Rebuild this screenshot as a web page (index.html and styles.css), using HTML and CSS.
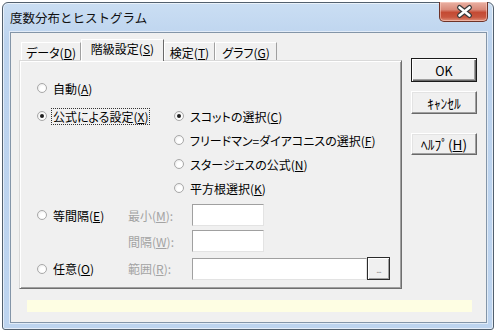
FILE: index.html
```html
<!DOCTYPE html>
<html lang="ja">
<head>
    <meta charset="UTF-8">
    <title>度数分布とヒストグラム</title>
    <link rel="stylesheet" href="styles.css">
</head>
<body>
    <div class="window">
        <div class="titlebar">
            <span class="title">度数分布とヒストグラム</span>
            <div class="close">
                <svg width="49" height="20" viewBox="0 0 49 20">
                    <path d="M19.5 6.5 L29.5 14.5 M29.5 6.5 L19.5 14.5" stroke="#3a3a3a" stroke-width="5" stroke-linecap="round"/>
                    <path d="M19.5 6.5 L29.5 14.5 M29.5 6.5 L19.5 14.5" stroke="#fff" stroke-width="2.6" stroke-linecap="round"/>
                </svg>
            </div>
        </div>
        <div class="client">
            <div class="main">
                <div class="tabctl">
                    <div class="tabs">
                        <div class="tab t1">データ(<u>D</u>)</div>
                        <div class="tab t2 active">階級設定(<u>S</u>)</div>
                        <div class="tab t3">検定(<u>T</u>)</div>
                        <div class="tab t4">グラフ(<u>G</u>)</div>
                    </div>
                    <div class="panel">
                        <div class="first">
                            <label class="opt"><span class="radio"></span><span>自動(<u>A</u>)</span></label>
                        </div>
                        <div class="upper">
                            <label class="opt"><span class="radio on"></span><span class="focus">公式による設定(<u>X</u>)</span></label>
                            <label class="opt"><span class="radio on"></span><span>スコットの選択(<u>C</u>)</span></label>
                            <label class="opt col2"><span class="radio"></span><span>フリードマン=ダイアコニスの選択(<u>F</u>)</span></label>
                            <label class="opt col2"><span class="radio"></span><span>スタージェスの公式(<u>N</u>)</span></label>
                            <label class="opt col2"><span class="radio"></span><span>平方根選択(<u>K</u>)</span></label>
                        </div>
                        <div class="lower">
                            <label class="opt"><span class="radio"></span><span>等間隔(<u>E</u>)</span></label>
                            <span class="dim">最小(<u>M</u>):</span>
                            <span class="field short"></span>

                            <span class="dim col2">間隔(<u>W</u>):</span>
                            <span class="field short"></span>

                            <label class="opt"><span class="radio"></span><span>任意(<u>O</u>)</span></label>
                            <span class="dim">範囲(<u>R</u>):</span>
                            <div class="range">
                                <span class="field long"></span>
                                <span class="browse">...</span>
                            </div>
                        </div>
                    </div>
                </div>
                <div class="buttons">
                    <div class="btn default">OK</div>
                    <div class="btn">ｷｬﾝｾﾙ</div>
                    <div class="btn help"><span>ﾍﾙﾌﾟ(<u>H</u>)</span></div>
                </div>
            </div>
            <div class="status"></div>
        </div>
    </div>
</body>
</html>
```

FILE: styles.css
```css
body {
    margin: 0;
    background-color: #fff;
    font-family: "Noto Sans CJK JP", "Noto Sans", sans-serif;
    font-size: 12px;
    color: #000;
}

u {
    text-decoration-thickness: 1px;
    text-underline-offset: 1px;
}

.window {
    margin: 2px 0 0 2px;
    width: 492px;
    height: 328px;
    box-sizing: border-box;
    border: 1px solid #52606e;
    border-radius: 6px 6px 3px 3px;
    background: linear-gradient(#cadef3, #bcd3ee 40px, #bdd4ef);
    box-shadow: inset 0 0 0 1px rgba(255, 255, 255, 0.6);
    padding: 0 5px 6px 7px;
}

.titlebar {
    display: flex;
    justify-content: space-between;
    height: 29px;
}
.title {
    font-size: 12.5px;
    line-height: 29px;
    color: #111;
}
.close {
    width: 49px;
    height: 20px;
    margin-top: -1px;
    box-sizing: border-box;
    border: 1px solid #6e3328;
    border-top: none;
    border-radius: 0 0 5px 5px;
    background: linear-gradient(#eab1a3, #d98a7a 40%, #c44a33 55%, #c8563f 80%, #e0927c);
    box-shadow: inset 0 0 0 1px rgba(255, 220, 210, 0.5);
}
.close svg {
    display: block;
    margin-top: -1px;
}

.client {
    width: 477px;
    height: 291px;
    box-sizing: border-box;
    border: 1px solid #8395a8;
    box-shadow: 0 0 0 1px rgba(255, 255, 255, 0.55);
    background-color: #f0f0f0;
    padding: 6px 8px 0 8px;
}

.main {
    display: flex;
    gap: 9px;
}

.tabctl {
    width: 383px;
}
.tabs {
    display: flex;
    height: 21px;
    padding-left: 2px;
    align-items: flex-end;
}
.tab {
    height: 18px;
    line-height: 18px;
    text-align: center;
    box-sizing: border-box;
    border-left: 1px solid #fff;
    border-right: 1px solid #a0a0a0;
    border-top: 1px solid #fff;
    font-feature-settings: "palt";
    padding-top: 1px;
}
.t1 { width: 60px; }
.t2 { width: 83px; }
.t3 { width: 51px; }
.t4 { width: 62px; }
.tab.active {
    height: 22px;
    margin-bottom: -1px;
    line-height: 18px;
    padding-top: 0;
    background-color: #f0f0f0;
    border-right: 1px solid #696969;
    position: relative;
}

.panel {
    height: 229px;
    box-sizing: border-box;
    border: 1px solid;
    border-color: #d9d9d9 #6f6f6f #6f6f6f #d9d9d9;
    box-shadow: inset 1px 1px #fff, inset -1px -1px #a0a0a0;
    padding: 15px 0 0 17px;
    font-feature-settings: "palt";
}

.opt {
    display: flex;
    align-items: center;
    gap: 6px;
    height: 24px;
    white-space: nowrap;
}
.radio {
    width: 10px;
    height: 10px;
    box-sizing: border-box;
    border-radius: 50%;
    border: 1px solid #a8a8a8;
    background: radial-gradient(circle at 60% 60%, #fff 35%, #e2e2e2);
    display: flex;
    align-items: center;
    justify-content: center;
    flex-shrink: 0;
}
.radio.on::after {
    content: "";
    width: 4px;
    height: 4px;
    border-radius: 50%;
    background-color: #1e1e1e;
}
.focus {
    outline: 1px dotted #333;
    padding: 0 1px;
    margin-left: -1px;
    line-height: 15px;
}

.first {
    margin-bottom: 4px;
}
.upper {
    display: grid;
    grid-template-columns: 137px 1fr;
    grid-auto-rows: 24px;
}
.col2 {
    grid-column: 2;
}

.lower {
    display: grid;
    grid-template-columns: 91px 64px 1fr;
    grid-template-rows: 22px 22px 25px;
    row-gap: 4px;
    margin-top: 4px;
    align-items: center;
}
.lower .opt {
    height: 22px;
}
.dim {
    color: #a3a3a3;
}

.field {
    display: block;
    height: 22px;
    box-sizing: border-box;
    background-color: #fff;
    border: 1px solid;
    border-color: #a0a0a0 #e3e3e3 #e3e3e3 #a0a0a0;
}
.short {
    width: 72px;
}
.long {
    width: 175px;
}
.range {
    display: flex;
    align-items: center;
}
.browse {
    width: 23px;
    height: 23px;
    box-sizing: border-box;
    border: 1px solid #2b2b2b;
    box-shadow: inset 1px 1px #fff, inset -1px -1px #a0a0a0;
    background-color: #f0f0f0;
    color: #9a9a9a;
    font-size: 9px;
    line-height: 9px;
    display: flex;
    justify-content: center;
    align-items: flex-end;
    padding-bottom: 5px;
    letter-spacing: -1px;
}

.buttons {
    width: 66px;
    padding-top: 19px;
    display: flex;
    flex-direction: column;
    gap: 9px;
    font-size: 13.5px;
}
.btn {
    height: 23px;
    box-sizing: border-box;
    border: 1px solid;
    border-color: #fff #696969 #696969 #fff;
    box-shadow: inset -1px -1px #a0a0a0, inset 1px 1px #e3e3e3;
    background-color: #f0f0f0;
    display: flex;
    align-items: center;
    justify-content: center;
}
.btn.default {
    height: 24px;
    font-size: 12.5px;
    border: 1px solid #1a1a1a;
    box-shadow: inset 1px 1px #fff, inset -1px -1px #696969, inset -2px -2px #a0a0a0;
}
.btn.help {
    margin-top: 10px;
    height: 22px;
}

.status {
    margin: 11px 0 0 8px;
    width: 445px;
    height: 12px;
    background-color: #fefee3;
}
```
